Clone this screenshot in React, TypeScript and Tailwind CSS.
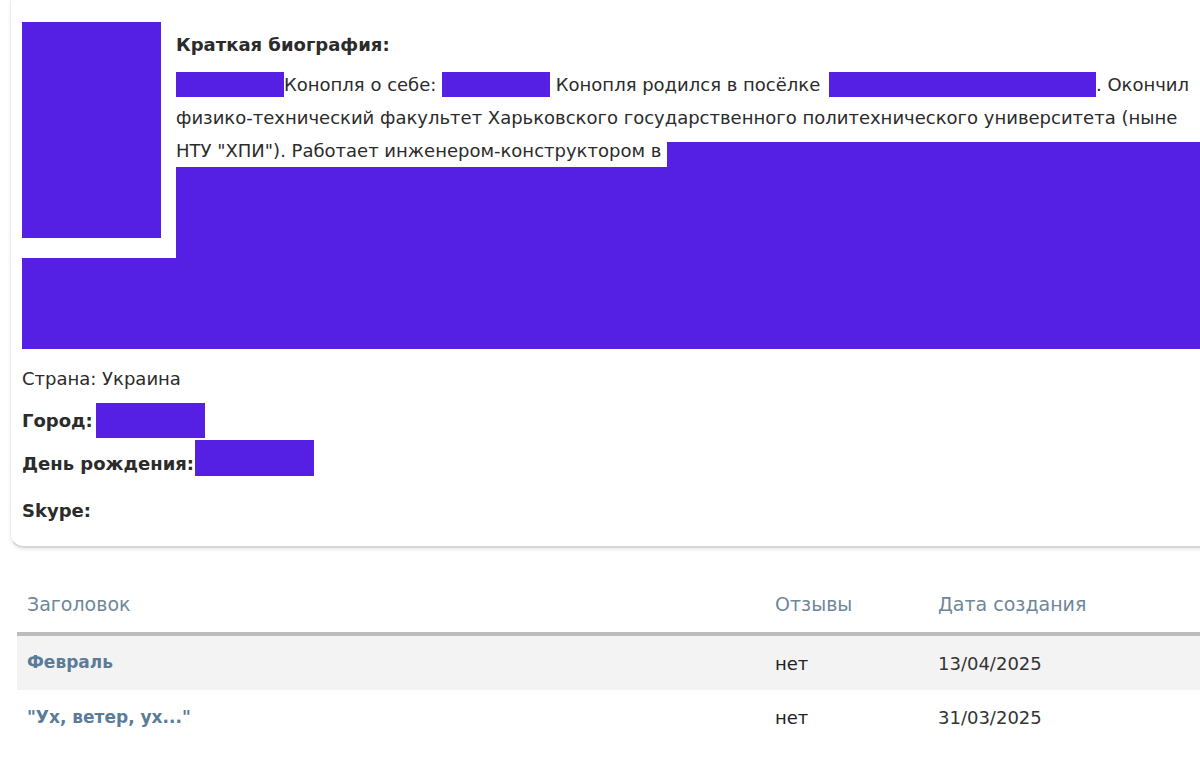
import React from "react";

const P = "bg-[#5520e4]";

export default function App() {
  return (
    <div
      className="w-[1200px] h-[758px] overflow-hidden bg-white text-[#2b2b2b]"
      style={{ fontFamily: '"DejaVu Sans", "Noto Sans", sans-serif' }}
    >
      {/* Profile card */}
      <div className="ml-[10px] w-[1240px] rounded-bl-[14px] border-b-2 border-l border-[#d6d6d6] border-l-[#eeeeee] shadow-[0_2px_3px_rgba(0,0,0,0.08)] pl-[11px] pt-[22px] pb-[20px]">
        <div className="flex">
          <div className={`w-[139px] h-[216px] ${P} shrink-0`} />
          <div className="ml-[15px] flex-1 flex flex-col">
            <div className="text-[18px] font-bold leading-[22px] mt-[12px]">Краткая биография:</div>
            <div className="mt-[12px] text-[18px] leading-[33px] whitespace-nowrap">
              <div className="flex items-center h-[33px]">
                <span className={`inline-block w-[108px] h-[25px] ${P}`} />
                <span>Конопля о себе:&nbsp;</span>
                <span className={`inline-block w-[108px] h-[25px] ${P}`} />
                <span>&nbsp;Конопля родился в посёлке&nbsp;</span>
                <span className={`inline-block w-[267px] h-[25px] ${P} ml-[3px]`} />
                <span>. Окончил</span>
              </div>
              <div className="h-[33px]">
                физико-технический факультет Харьковского государственного политехнического университета (ныне
              </div>
              <div className="flex items-end h-[33px]">
                <span className="self-center">НТУ "ХПИ"). Работает инженером-конструктором в&nbsp;</span>
                <span className={`inline-block flex-1 h-[25px] ${P}`} />
              </div>
            </div>
            <div className={`h-[91px] ${P}`} />
          </div>
        </div>
        <div className={`h-[91px] ${P}`} />

        {/* Info */}
        <div className="mt-[15px] flex flex-col text-[18px] leading-[30px]">
          <div className="h-[30px] flex items-center">
            <span>Страна: Украина</span>
          </div>
          <div className="mt-[12px] h-[30px] flex items-center">
            <span className="font-bold">Город:</span>
            <span className={`inline-block w-[109px] h-[35px] ${P} ml-[3px] mt-[-1px]`} />
          </div>
          <div className="mt-[13px] h-[30px] flex items-center">
            <span className="font-bold">День рождения:</span>
            <span className={`inline-block w-[119px] h-[36px] ${P} ml-[1px] mt-[-12px]`} />
          </div>
          <div className="mt-[17px] h-[30px] flex items-center">
            <span className="font-bold">Skype:</span>
          </div>
        </div>
      </div>

      {/* Table */}
      <div className="ml-[17px] mt-[28px] w-[1200px] text-[18px]">
        <div className="flex h-[60px] items-center border-b-[4px] border-[#bcbcbc] text-[19px] text-[#6f8799]">
          <div className="w-[748px] pl-[10px]">Заголовок</div>
          <div className="w-[163px] pl-[10px]">Отзывы</div>
          <div className="pl-[10px]">Дата создания</div>
        </div>
        <div className="flex h-[54px] items-center bg-[#f3f3f3]">
          <div className="w-[748px] pl-[10px] text-[17px] text-[#5b7c98] font-bold">Февраль</div>
          <div className="w-[163px] pl-[10px] text-[#222]">нет</div>
          <div className="pl-[10px] text-[#333]">13/04/2025</div>
        </div>
        <div className="flex h-[55px] items-center bg-white">
          <div className="w-[748px] pl-[10px] text-[17px] text-[#5b7c98] font-bold">"Ух, ветер, ух..."</div>
          <div className="w-[163px] pl-[10px] text-[#222]">нет</div>
          <div className="pl-[10px] text-[#333]">31/03/2025</div>
        </div>
      </div>
    </div>
  );
}
